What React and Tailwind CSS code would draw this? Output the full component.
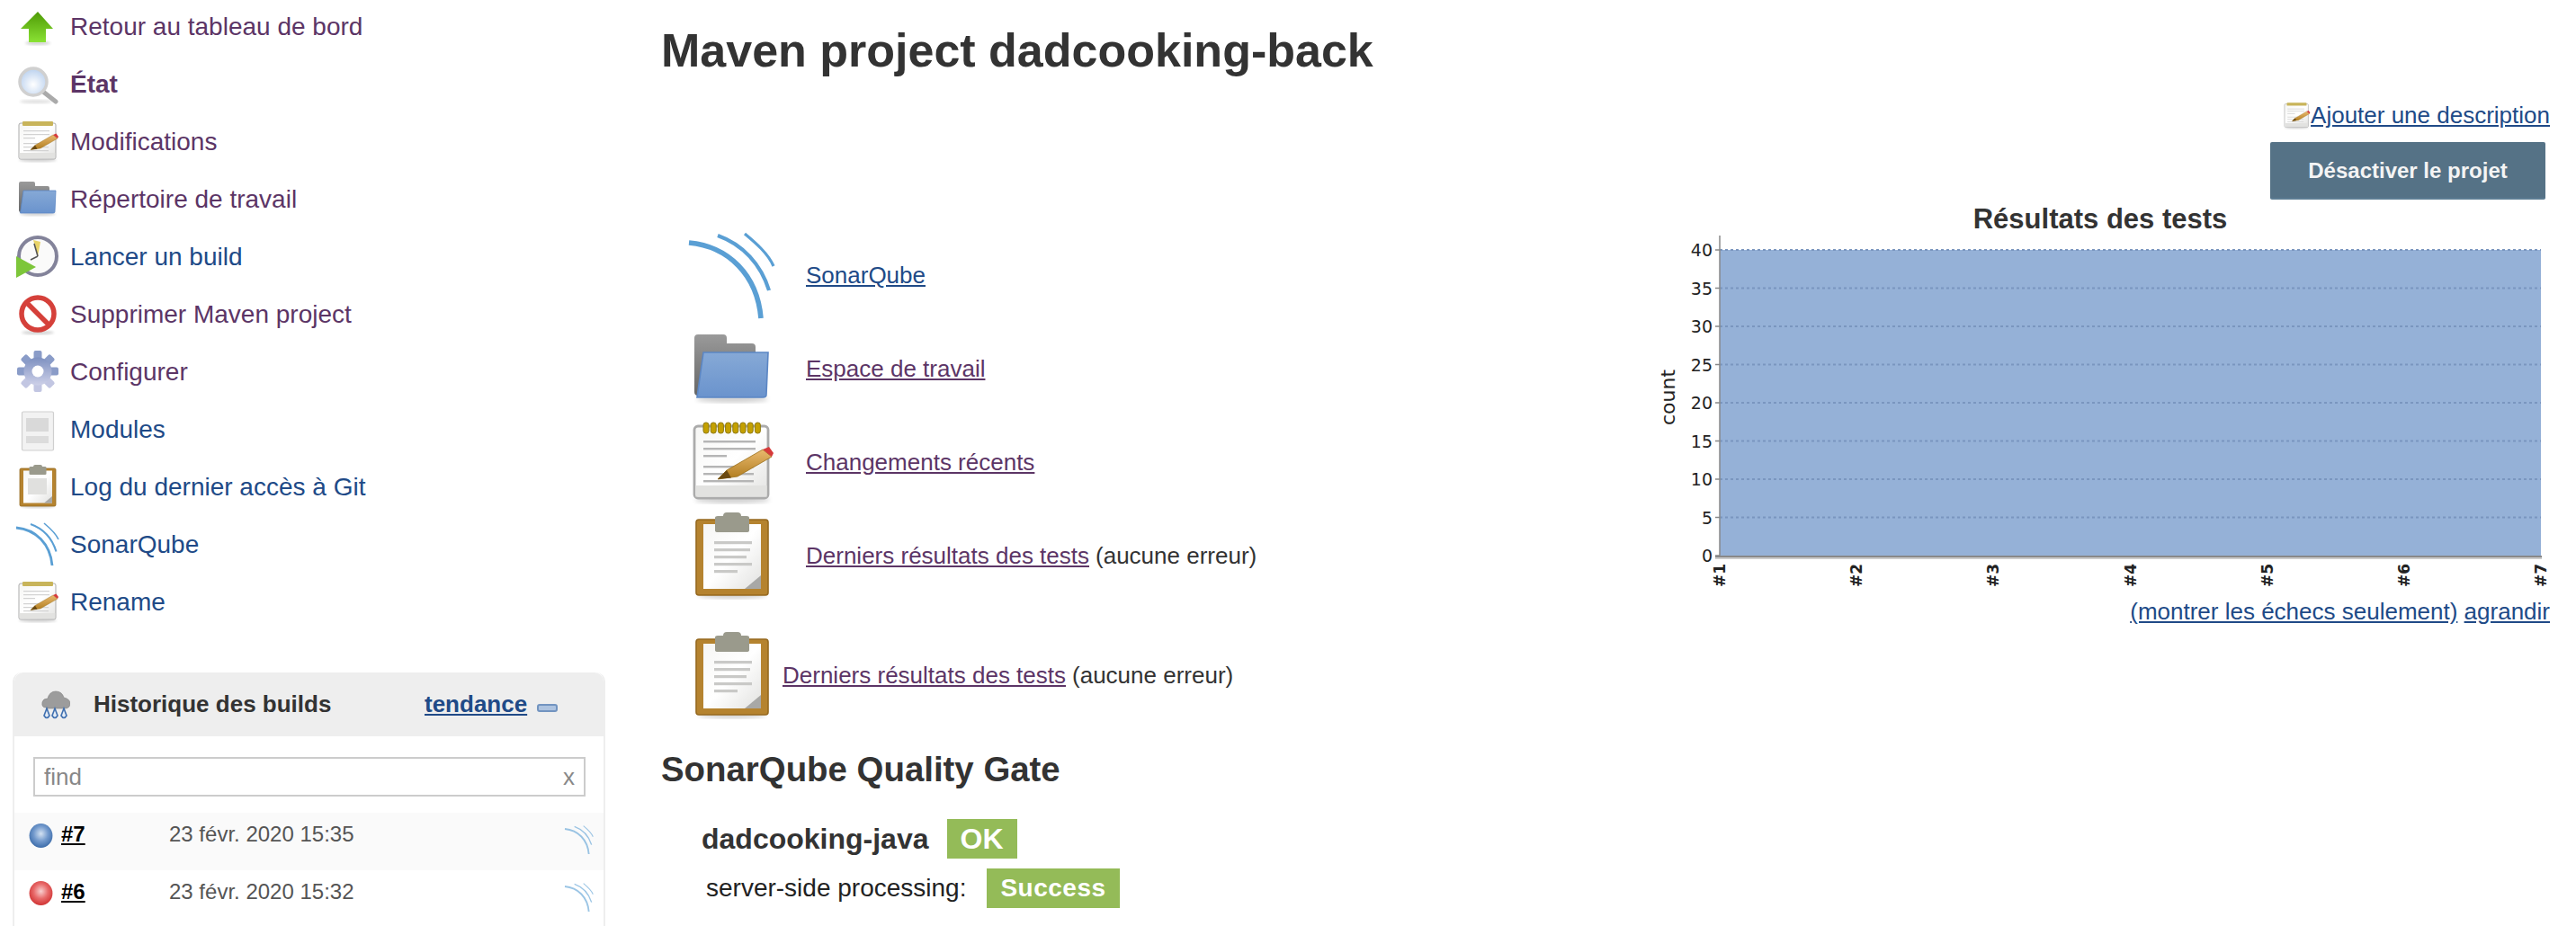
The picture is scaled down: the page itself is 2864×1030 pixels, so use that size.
import React from "react";

const Defs = () => (
  <svg width="0" height="0" className="absolute">
    <defs>
      <linearGradient id="gArrow" x1="0" y1="0" x2="0" y2="1"><stop offset="0" stopColor="#4e9a06" /><stop offset="1" stopColor="#8ae234" /></linearGradient>
      <linearGradient id="gPaper" x1="0" y1="0" x2="1" y2="1"><stop offset="0" stopColor="#f6f6f4" /><stop offset="0.5" stopColor="#ffffff" /><stop offset="1" stopColor="#e2e2e0" /></linearGradient>
      <linearGradient id="gBack" x1="0" y1="0" x2="0" y2="1"><stop offset="0" stopColor="#9a9a9a" /><stop offset="1" stopColor="#666666" /></linearGradient>
      <linearGradient id="gFront" x1="0" y1="0" x2="0" y2="1"><stop offset="0" stopColor="#86a9d6" /><stop offset="1" stopColor="#6a93cd" /></linearGradient>
      <linearGradient id="gGear" x1="0" y1="0" x2="0" y2="1"><stop offset="0" stopColor="#7d90c0" /><stop offset="1" stopColor="#cdd0e8" /></linearGradient>
      <linearGradient id="gPencil" x1="0" y1="0" x2="0" y2="1"><stop offset="0" stopColor="#e9b96e" /><stop offset="1" stopColor="#b07c1e" /></linearGradient>
      <radialGradient id="gBlue" cx="0.5" cy="0.42" r="0.62"><stop offset="0" stopColor="#d4e2f2" /><stop offset="0.5" stopColor="#739acd" /><stop offset="1" stopColor="#3465a4" /></radialGradient>
      <radialGradient id="gRed" cx="0.5" cy="0.42" r="0.62"><stop offset="0" stopColor="#f8d0d0" /><stop offset="0.5" stopColor="#e86a6a" /><stop offset="1" stopColor="#cc2b2b" /></radialGradient>
      <radialGradient id="gLens" cx="0.5" cy="0.6" r="0.6"><stop offset="0" stopColor="#ffffff" /><stop offset="1" stopColor="#b9d0ee" /></radialGradient>
      <filter id="soft"><feGaussianBlur stdDeviation="1.4" /></filter>
    </defs>
  </svg>
);

const Icon = ({ size = 48, children, className = "" }) => (
  <svg width={size} height={size} viewBox="0 0 48 48" className={"shrink-0 overflow-visible " + className}>
    {children}
  </svg>
);

const Shadow = ({ y = 44, rx = 20 }) => <ellipse cx="24" cy={y} rx={rx} ry="2" fill="#000" opacity="0.18" filter="url(#soft)" />;

const ArrowIcon = (p) => (
  <Icon {...p}>
    <Shadow y={43} rx={14} />
    <path d="M24 8 L41 27 L33 27 L33 42 L14 42 L14 27 L5 27 Z" fill="url(#gArrow)" />
  </Icon>
);

const SearchIcon = (p) => (
  <Icon {...p}>
    <ellipse cx="22" cy="44" rx="18" ry="2" fill="#000" opacity="0.12" filter="url(#soft)" />
    <path d="M30 33 L44 44" stroke="#aaaaaa" strokeWidth="5" strokeLinecap="round" />
    <circle cx="19" cy="22" r="15" fill="url(#gLens)" stroke="#d0d0d0" strokeWidth="3.5" />
  </Icon>
);

const NoteIcon = ({ size = 48 }) => {
  const big = size > 60;
  return (
    <Icon size={size}>
      <Shadow y={45} rx={21} />
      <rect x="3" y="4" width="41" height="40" rx="2" fill="url(#gPaper)" stroke="#ababab" strokeWidth={big ? 1.4 : 1} />
      <rect x="3.7" y="37" width="39.6" height="6.3" fill="#e2e2e0" />
      {big ? (
        [0, 1, 2, 3, 4, 5, 6, 7].map((i) => (
          <rect key={i} x={8 + i * 4.1} y="2" width="3" height="6" rx="1.4" fill="#c4a000" stroke="#8f7a10" strokeWidth="0.5" />
        ))
      ) : (
        <rect x="7" y="2" width="34" height="5" rx="1" fill="#c8b45a" />
      )}
      {[12, 16, 20, 26, 30, 34].map((y, i) => (
        <rect key={i} x="8" y={y} width={i === 2 ? 13 : i > 2 ? 28 : 29} height="1.2" fill={big ? "#b5b5b5" : "#d2d2d2"} />
      ))}
      <path d="M16 33.5 L21 28.5 L41 17 L46 21 L27 32 Z" fill="url(#gPencil)" stroke="#9a6f18" strokeWidth="0.4" />
      <path d="M16 33.5 L21 28.5 L23.5 32.7 Z" fill="#6b4a12" />
      <path d="M41 17 L44.5 15.5 L47 19 L46 21 Z" fill="#d63a3a" />
    </Icon>
  );
};

const FolderIcon = (p) => (
  <Icon {...p}>
    <Shadow y={41} rx={20} />
    <path d="M3 7 Q3 5 5 5 L19 5 Q21 5 21 7 L21 10 L35 10 Q37 10 37 12 L37 39 L5 39 Q3 39 3 37 Z" fill="url(#gBack)" />
    <path d="M8 15 L44 15 L43 38.5 Q43 40 41 40 L4.5 40 Z" fill="url(#gFront)" stroke="#5b86c4" strokeWidth="0.8" />
  </Icon>
);

const BuildIcon = (p) => (
  <Icon {...p}>
    <circle cx="24" cy="24" r="21" fill="#fafafa" stroke="#83839a" strokeWidth="4" />
    <path d="M24 24 L19 6 L27 8 Z" fill="#e8d36a" />
    <path d="M24 24 L20 10 M24 24 L16 28" stroke="#555" strokeWidth="1.6" />
    <path d="M0 24 L22 36 L0 48 Z" fill="#7dc63a" />
  </Icon>
);

const NoIcon = (p) => (
  <Icon {...p}>
    <Shadow y={45} rx={18} />
    <circle cx="24" cy="24" r="18" fill="#fff" stroke="#d5403a" strokeWidth="5.5" />
    <path d="M12 12 L36 36" stroke="#d5403a" strokeWidth="5.5" />
  </Icon>
);

const GearIcon = (p) => (
  <Icon {...p}>
    {[0, 45, 90, 135, 180, 225, 270, 315].map((a) => (
      <rect key={a} x="19.5" y="1" width="9" height="12" rx="2" fill={a > 90 && a < 270 ? "#c2c6e2" : "#8a9cc8"} transform={`rotate(${a} 24 24)`} />
    ))}
    <circle cx="24" cy="24" r="15.5" fill="url(#gGear)" />
    <circle cx="24" cy="24" r="6.5" fill="#fff" />
  </Icon>
);

const ModuleIcon = (p) => (
  <Icon {...p}>
    <rect x="6.5" y="5" width="35" height="43" rx="1.5" fill="#f2f2f2" stroke="#cfcfcf" strokeWidth="1.2" />
    <rect x="11" y="12" width="25" height="15" fill="#d9d9d9" />
    <rect x="11" y="32" width="25" height="8" fill="#dcdcdc" />
  </Icon>
);

const ClipIcon = ({ size = 48 }) => {
  const big = size > 60;
  return (
    <Icon size={size}>
      <Shadow y={46} rx={19} />
      <rect x="4" y="4" width="40" height="42" rx="1.5" fill="#b5832f" stroke="#96691f" strokeWidth="0.8" />
      <rect x="8" y="6.5" width="32" height="36" fill="url(#gPaper)" />
      {big ? (
        [16, 20, 24, 28, 32].map((y, i) => (
          <rect key={y} x="14" y={y} width={[21, 20, 18, 21, 13][i]} height="1.6" fill="#c9c9c7" />
        ))
      ) : (
        <rect x="13" y="15" width="21" height="18" fill="#e0e0de" />
      )}
      <path d="M40 35 L40 42.5 L31 42.5 Z" fill="#a8a8a6" />
      <path d="M14.5 3 Q14.5 2 16 2 L19 2 Q19 0 21 0 L27 0 Q29 0 29 2 L32 2 Q33.5 2 33.5 3 L33.5 10 Q33.5 11 32 11 L16 11 Q14.5 11 14.5 10 Z" fill="#9a9a8c" />
    </Icon>
  );
};

const SonarIcon = ({ opacity = 1, ...p }) => (
  <Icon {...p}>
    <g fill="none" stroke="#5a9fd4" opacity={opacity}>
      <path d="M0 6 C22 8 38 24 40 48" strokeWidth="2.8" />
      <path d="M16 2 C30 7 40 18 44.5 32.5" strokeWidth="2.1" />
      <path d="M31 1 C37 6 44 12 47 19" strokeWidth="1.6" />
    </g>
  </Icon>
);

const CloudIcon = () => (
  <svg width="32" height="32" viewBox="0 0 32 32" className="shrink-0">
    <path d="M5 19 Q0 19 1 13 Q2 9 7 9 Q9 1 16 1 Q23 1 25 8 Q31 9 32 14 Q32 20 26 20 L6 20 Z" fill="#9c9c9c" stroke="#808080" strokeWidth="0.6" />
    {[4, 13, 23].map((x) => (
      <path key={x} d={`M${x + 2} 20 L${x - 1} 28 Q${x + 2} 33 ${x + 5} 28 Z`} fill="#e4ecf6" stroke="#3f6fb0" strokeWidth="1.6" />
    ))}
  </svg>
);

const sideItems = [
  { t: "Retour au tableau de bord", I: ArrowIcon, c: "text-[#5c3566]" },
  { t: "État", I: SearchIcon, c: "text-[#5c3566] font-bold" },
  { t: "Modifications", I: NoteIcon, c: "text-[#5c3566]" },
  { t: "Répertoire de travail", I: FolderIcon, c: "text-[#5c3566]" },
  { t: "Lancer un build", I: BuildIcon, c: "text-[#204a87]" },
  { t: "Supprimer Maven project", I: NoIcon, c: "text-[#5c3566]" },
  { t: "Configurer", I: GearIcon, c: "text-[#5c3566]" },
  { t: "Modules", I: ModuleIcon, c: "text-[#204a87]" },
  { t: "Log du dernier accès à Git", I: ClipIcon, c: "text-[#204a87]" },
  { t: "SonarQube", I: SonarIcon, c: "text-[#204a87]" },
  { t: "Rename", I: NoteIcon, c: "text-[#204a87]" },
];

const BuildRow = ({ n, date, color, bg }) => (
  <div className={"flex items-start h-[64px] pt-[10px] pl-[16px] pr-[11px] leading-[28px] " + bg}>
    <svg width="27" height="29" viewBox="0 0 26 28" className="shrink-0 mt-[1px]">
      <ellipse cx="13" cy="14" rx="12.5" ry="13" fill={`url(#${color})`} />
    </svg>
    <a className="ml-[9px] w-[120px] text-[24px] font-bold underline text-black">{n}</a>
    <span className="text-[24px] text-[#555]">{date}</span>
    <span className="ml-auto opacity-60 mt-[4px]">
      <SonarIcon size={32} />
    </span>
  </div>
);

const MainLink = ({ I, children, tail, color }) => (
  <div className="flex items-center h-[96px] mb-[8px]">
    <I size={96} />
    <a className={"ml-[34px] underline " + color}>{children}</a>
    {tail && <span className="ml-[7px] text-[#333]">{tail}</span>}
  </div>
);

const Chart = () => {
  const ys = [40, 35, 30, 25, 20, 15, 10, 5, 0];
  const Y = (v) => 358 - v * 8.5;
  const xs = [1, 2, 3, 4, 5, 6, 7];
  const X = (i) => 77 + (i - 1) * 152.2;
  return (
    <svg width="1000" height="400" viewBox="0 0 1000 400" className="block" style={{ fontFamily: "'DejaVu Sans', sans-serif" }}>
      <rect x="77" y="18" width="913" height="340" fill="#95b1d7" />
      {ys.slice(0, 8).map((v) => (
        <line key={v} x1="77" x2="990" y1={Y(v)} y2={Y(v)} stroke="#7a96bf" strokeWidth="2" strokeDasharray="3 3" />
      ))}
      <line x1="77" x2="77" y1="2" y2="358" stroke="#888" strokeWidth="1.5" />
      <line x1="72" x2="991" y1="359" y2="359" stroke="#888" strokeWidth="2" />
      <line x1="72" x2="991" y1="361" y2="361" stroke="#ccc" strokeWidth="2" />
      {ys.map((v) => (
        <g key={v}>
          <line x1="72" x2="77" y1={Y(v)} y2={Y(v)} stroke="#888" strokeWidth="1.5" />
          <text x="69" y={Y(v) + 7} textAnchor="end" fontSize="19" fill="#222">{v}</text>
        </g>
      ))}
      {xs.map((i) => (
        <text key={i} transform={`translate(${X(i) + 6} 367) rotate(-90)`} textAnchor="end" fontSize="17" fontWeight="bold" fill="#222">{"#" + i}</text>
      ))}
      <text transform="translate(27 182) rotate(-90)" textAnchor="middle" fontSize="22" fill="#222">count</text>
    </svg>
  );
};

export default function App() {
  return (
    <div className="flex h-[1030px] w-[2864px] overflow-hidden bg-white font-['Liberation_Sans',sans-serif] text-[28px] text-[#333]">
      <Defs />
      <aside className="w-[680px] shrink-0 -mt-[3px]">
        <ul className="pl-[18px]">
          {sideItems.map(({ t, I, c }) => (
            <li key={t} className="flex items-center h-[64px]">
              <span className="flex blur-[0.4px]">
                <I size={48} />
              </span>
              <a className={"ml-[12px] pt-[1px] " + c}>{t}</a>
            </li>
          ))}
        </ul>
        <section className="ml-[14px] w-[659px] mt-[47px] border-x-2 border-[#eeeeee] rounded-t-[10px]">
          <header className="flex items-center h-[71px] bg-[#eeeeee] rounded-t-[10px] pl-[30px] text-[26px]">
            <CloudIcon />
            <b className="ml-[26px] w-[368px] text-[#333]">Historique des builds</b>
            <a className="font-bold underline text-[#204a87]">tendance</a>
            <span className="ml-[11px] mt-[8px] w-[23px] h-[9px] rounded-[3px] bg-[#adc3e0] border-2 border-[#7294c0]" />
          </header>
          <div className="px-[21px] pt-[23px] pb-[18px]">
            <div className="flex items-center h-[44px] w-[614px] border-2 border-[#cccccc] pl-[10px] pr-[10px]">
              <input readOnly placeholder="find" className="flex-1 min-w-0 outline-none text-[26px] placeholder:text-[#888888]" />
              <span className="text-[26px] text-[#888888]">x</span>
            </div>
          </div>
          <BuildRow n="#7" date="23 févr. 2020 15:35" color="gBlue" bg="bg-[#fafafa]" />
          <BuildRow n="#6" date="23 févr. 2020 15:32" color="gRed" bg="bg-white" />
        </section>
      </aside>

      <main className="flex-1 min-w-0 pl-[55px] pr-[29px]">
        <h1 className="pt-[26px] text-[52px] leading-[60px] font-bold text-[#333]">Maven project dadcooking-back</h1>
        <div className="mt-[27px] flex justify-end items-center h-[31px] text-[26px]">
          <NoteIcon size={31} />
          <a className="underline text-[#204a87]">Ajouter une description</a>
        </div>
        <div className="mt-[14px] flex justify-end pr-[5px]">
          <button className="w-[306px] h-[64px] pt-[2px] rounded-[2px] bg-[#557286] border-b-2 border-[#5d7d93] text-[24px] font-bold text-[#f4f4f4]">Désactiver le projet</button>
        </div>

        <div className="flex justify-between">
          <div>
            <div className="pt-[36px] pl-[31px] text-[26px]">
              <MainLink I={SonarIcon} color="text-[#204a87]">SonarQube</MainLink>
              <MainLink I={FolderIcon} color="text-[#5c3566]">Espace de travail</MainLink>
              <MainLink I={NoteIcon} color="text-[#5c3566]">Changements récents</MainLink>
              <MainLink I={ClipIcon} color="text-[#5c3566]" tail="(aucune erreur)">Derniers résultats des tests</MainLink>
              <div className="mt-[37px] flex items-center h-[96px]">
                <ClipIcon size={96} />
                <a className="ml-[8px] underline text-[#5c3566]">Derniers résultats des tests</a>
                <span className="ml-[7px] text-[#333]">(aucune erreur)</span>
              </div>
            </div>
            <h2 className="mt-[32px] text-[38.4px] leading-[50px] font-bold text-[#333]">SonarQube Quality Gate</h2>
            <div className="mt-[30px] ml-[45px] flex items-center h-[44px]">
              <b className="text-[32px] text-[#333]">dadcooking-java</b>
              <span className="ml-[20px] w-[78px] h-[44px] flex items-center justify-center bg-[#94bb58] text-white font-bold text-[32px]">OK</span>
            </div>
            <div className="mt-[11px] ml-[50px] flex items-center h-[44px]">
              <span className="w-[312px] text-[#222]">server-side processing:</span>
              <span className="w-[148px] h-[44px] flex items-center justify-center bg-[#94bb58] text-white font-bold tracking-[0.5px]">Success</span>
            </div>
          </div>

          <div className="w-[1000px] shrink-0">
            <h3 className="mt-[6px] text-center text-[31px] leading-[32px] font-bold text-[#333]">Résultats des tests</h3>
            <Chart />
            <div className="h-[40px] leading-[40px] text-right text-[26px] text-[#204a87]">
              <a className="underline">(montrer les échecs seulement)</a> <a className="underline">agrandir</a>
            </div>
          </div>
        </div>
      </main>
    </div>
  );
}
